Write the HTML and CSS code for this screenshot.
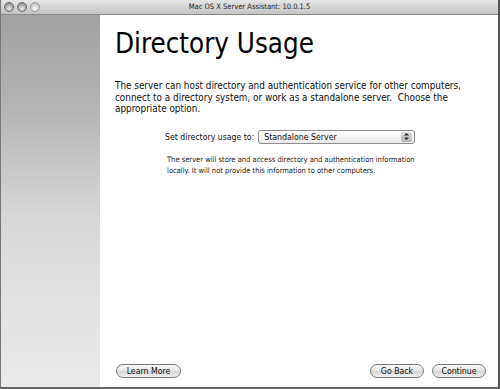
FILE: index.html
```html
<!DOCTYPE html>
<html>
<head>
<meta charset="utf-8">
<link rel="stylesheet" href="styles.css">
</head>
<body>
<div class="window">
  <div class="titlebar">
    <div class="lights">
      <span class="light"></span><span class="light"></span><span class="light dim"></span>
    </div>
    <div class="title">Mac OS X Server Assistant: 10.0.1.5</div>
  </div>
  <div class="body">
    <div class="sidebar"></div>
    <div class="content">
      <h1 class="heading">Directory Usage</h1>
      <p class="intro">The server can host directory and authentication service for other computers, connect to a directory system, or work as a standalone server.&nbsp; Choose the appropriate option.</p>
      <div class="row">
        <span class="label">Set directory usage to:</span>
        <div class="popup"><span>Standalone Server</span><span class="arrows"><svg width="7" height="9" viewBox="0 0 7 9"><path d="M1 3.5 L3.5 1 L6 3.5Z M1 5.5 L3.5 8 L6 5.5Z" fill="#222"/></svg></span></div>
      </div>
      <p class="note">The server will store and access directory and authentication information locally. It will not provide this information to other computers.</p>
      <div class="spacer"></div>
      <div class="buttons">
        <button class="btn learn">Learn More</button>
        <div class="right">
          <button class="btn">Go Back</button>
          <button class="btn">Continue</button>
        </div>
      </div>
    </div>
  </div>
</div>
</body>
</html>
```
FILE: styles.css
```css
html, body { margin: 0; padding: 0; background: #fff; }
body { width: 500px; height: 389px; overflow: hidden; font-family: "DejaVu Sans Condensed", "DejaVu Sans", "Liberation Sans", sans-serif; font-stretch: condensed; color: #111; }
.window { width: 500px; height: 389px; box-sizing: border-box; border-left: 1px solid #777; border-right: 2px solid #555; border-bottom: 2px solid #666; display: flex; flex-direction: column; }
.titlebar { height: 14px; background: linear-gradient(#e6e6e6, #c4c4c4); border-bottom: 1px solid #8a8a8a; position: relative; display: flex; align-items: center; }
.lights { display: flex; gap: 3px; padding-left: 3px; }
.light { width: 10px; height: 10px; border-radius: 50%; box-sizing: border-box; border: 1px solid #6a6a6a; background: radial-gradient(circle at 50% 70%, #f0f0f0 0%, #a8a8a8 55%, #777 100%); }
.light.dim { border-color: #9a9a9a; background: radial-gradient(circle at 50% 70%, #fafafa 0%, #cfcfcf 60%, #aaa 100%); }
.title { position: absolute; left: 0; right: 0; top: 0; text-align: center; font-size: 7.5px; line-height: 14px; color: #222; }
.body { flex: 1; display: flex; min-height: 0; }
.sidebar { width: 99px; flex: none; background: linear-gradient(#a2a2a2 0%, #b4b4b4 25%, #d8d8d8 55%, #eaeaea 100%); }
.content { flex: 1; display: flex; flex-direction: column; padding: 0 12px 9px 15px; }
.heading { font-weight: normal; font-size: 27.5px; margin: 11px 0 0 0; line-height: 34px; color: #000; white-space: nowrap; }
.intro { font-size: 9.85px; line-height: 11.5px; margin: 20px 0 0 0; width: 360px; }
.row { display: flex; align-items: center; margin: 15px 0 0 50px; }
.label { font-size: 8.7px; margin-right: 4px; }
.popup { width: 157px; height: 14px; box-sizing: border-box; border: 1px solid #8d8d8d; border-radius: 3px; background: linear-gradient(#fff, #e9e9e9); display: flex; align-items: center; justify-content: space-between; font-size: 8.7px; padding-left: 5px; }
.arrows { width: 11px; height: 10px; margin-right: 2px; border-radius: 2px; background: linear-gradient(#dcdcdc, #b5b5b5); display: flex; align-items: center; justify-content: center; }
.note { font-size: 7.5px; line-height: 11px; margin: 10px 0 0 52px; color: #222; width: 260px; }
.spacer { flex: 1; }
.buttons { display: flex; justify-content: space-between; align-items: center; }
.right { display: flex; gap: 8px; }
.btn { font-family: inherit; font-stretch: condensed; font-size: 8.7px; height: 14px; padding: 0; white-space: nowrap; border: 1px solid #7a7a7a; border-radius: 8px; background: linear-gradient(#fafafa, #e4e4e4 50%, #d4d4d4 51%, #f0f0f0); color: #111; line-height: 12px; }
.btn.learn { margin-left: 1px; width: 65px; }
.right .btn { width: 54px; }
```
